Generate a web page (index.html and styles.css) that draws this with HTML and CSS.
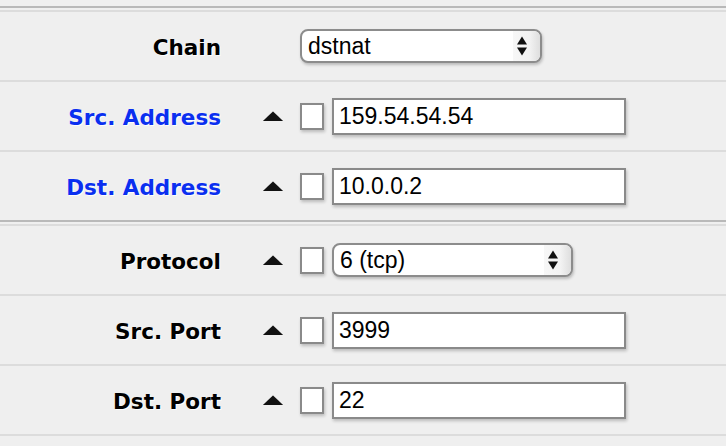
FILE: index.html
```html
<!DOCTYPE html>
<html>
<head>
<meta charset="utf-8">
<link rel="stylesheet" href="styles.css">
</head>
<body>
<div class="form">
  <div class="group">
    <div class="row">
      <div class="label">Chain</div>
      <div class="select chain-select">
        <span class="value">dstnat</span>
        <span class="arrows"><svg width="10" height="20" viewBox="0 0 10 20"><polygon points="0,8.5 5,0.5 10,8.5" fill="#111"/><polygon points="0,11.5 10,11.5 5,19.5" fill="#111"/></svg></span>
      </div>
    </div>
    <div class="row">
      <div class="label blue">Src. Address</div>
      <span class="toggle"><svg width="20" height="10" viewBox="0 0 20 10"><polygon points="0,10 10,0.5 20,10" fill="#111"/></svg></span>
      <span class="check"></span>
      <div class="field"><span class="value">159.54.54.54</span></div>
    </div>
    <div class="row">
      <div class="label blue">Dst. Address</div>
      <span class="toggle"><svg width="20" height="10" viewBox="0 0 20 10"><polygon points="0,10 10,0.5 20,10" fill="#111"/></svg></span>
      <span class="check"></span>
      <div class="field"><span class="value">10.0.0.2</span></div>
    </div>
  </div>
  <div class="group">
    <div class="row">
      <div class="label">Protocol</div>
      <span class="toggle"><svg width="20" height="10" viewBox="0 0 20 10"><polygon points="0,10 10,0.5 20,10" fill="#111"/></svg></span>
      <span class="check"></span>
      <div class="select proto-select">
        <span class="value">6 (tcp)</span>
        <span class="arrows"><svg width="10" height="20" viewBox="0 0 10 20"><polygon points="0,8.5 5,0.5 10,8.5" fill="#111"/><polygon points="0,11.5 10,11.5 5,19.5" fill="#111"/></svg></span>
      </div>
    </div>
    <div class="row">
      <div class="label">Src. Port</div>
      <span class="toggle"><svg width="20" height="10" viewBox="0 0 20 10"><polygon points="0,10 10,0.5 20,10" fill="#111"/></svg></span>
      <span class="check"></span>
      <div class="field"><span class="value">3999</span></div>
    </div>
    <div class="row">
      <div class="label">Dst. Port</div>
      <span class="toggle"><svg width="20" height="10" viewBox="0 0 20 10"><polygon points="0,10 10,0.5 20,10" fill="#111"/></svg></span>
      <span class="check"></span>
      <div class="field"><span class="value">22</span></div>
    </div>
  </div>
  <div class="end"></div>
</div>
</body>
</html>
```

FILE: styles.css
```css
* { box-sizing: border-box; }
html, body {
  margin: 0;
  background: #efefef;
}
.form {
  padding-top: 6px;
}
.group {
  border-top: 2px solid #b9b9b9;
  padding-top: 2px;
}
.row {
  height: 70px;
  border-top: 2px solid #dcdcdc;
  display: flex;
  align-items: center;
}
.end {
  border-top: 2px solid #dcdcdc;
}
.label {
  width: 221px;
  flex: none;
  text-align: right;
  font-family: "DejaVu Sans", Verdana, sans-serif;
  font-weight: bold;
  font-size: 21.5px;
  color: #000;
  text-shadow: 1px 1px 0 rgba(255, 255, 255, 0.9);
  white-space: nowrap;
  padding-top: 2px;
}
.label.blue {
  color: #0a2ff0;
}
.toggle {
  margin-left: 42px;
  width: 20px;
  height: 10px;
  display: flex;
  flex: none;
}
.toggle svg {
  display: block;
  filter: drop-shadow(0 0 0.5px rgba(0,0,0,0.4));
}
.check {
  margin-left: 17px;
  width: 24px;
  height: 27px;
  flex: none;
  background: #fff;
  border: 2px solid #8a8a8a;
  box-shadow: 1px 2px 3px rgba(0, 0, 0, 0.22);
}
.field {
  margin-left: 8px;
  width: 294px;
  height: 37px;
  flex: none;
  background: #fff;
  border: 2px solid #8a8a8a;
  box-shadow: 1px 2px 3px rgba(0, 0, 0, 0.22);
  display: flex;
  align-items: center;
  padding-left: 5px;
}
.value {
  font-family: "Liberation Sans", Arial, sans-serif;
  font-size: 23px;
  color: #000;
  white-space: nowrap;
}
.select {
  height: 34px;
  flex: none;
  background: #fff;
  border: 2px solid #8c8c8c;
  border-radius: 8px;
  box-shadow: 1px 2px 3px rgba(0, 0, 0, 0.22);
  display: flex;
  align-items: center;
  padding-left: 6px;
  overflow: hidden;
}
.chain-select {
  margin-left: 79px;
  width: 242px;
}
.proto-select {
  margin-left: 8px;
  width: 241px;
}
.select .value {
  flex: 1;
}
.select .arrows {
  align-self: stretch;
  width: 27px;
  display: flex;
  align-items: center;
  padding-left: 4px;
  background: linear-gradient(to right, #f7f7f7, #f3f3f3 60%, #dedede);
}
.select .arrows svg {
  display: block;
}
```
